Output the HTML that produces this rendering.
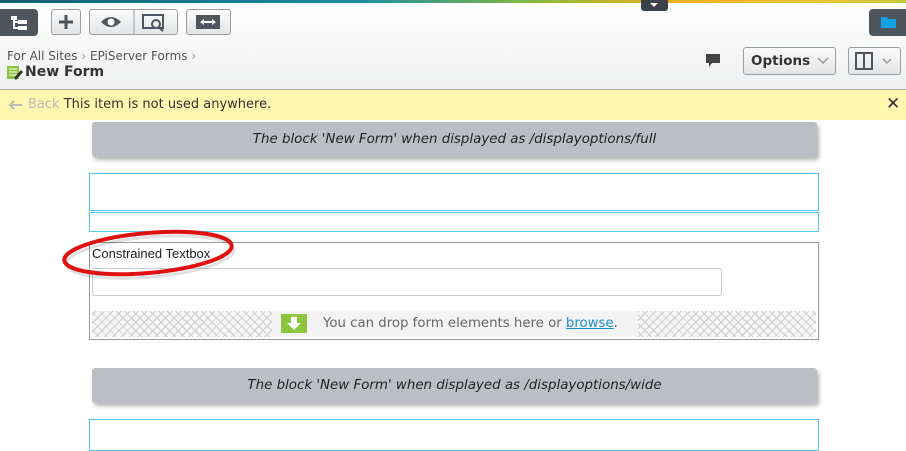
<!DOCTYPE html>
<html><head><style>
body{margin:0;width:906px;height:437px;overflow:hidden;font-family:"DejaVu Sans",sans-serif;background:#fff;position:relative}
.a{position:absolute}
.btn{position:absolute;top:9px;height:26px;border:1px solid #9a9ea3;border-radius:3px;background:linear-gradient(#fafafa,#e4e5e6);box-sizing:border-box}
.hdr{position:absolute;left:92px;width:725px;height:35px;background:#bbbfc4;border-radius:3px;box-shadow:2px 3px 4px rgba(0,0,0,.3);font-style:italic;font-size:13.4px;color:#222;text-align:center;line-height:35px}
.hatch{background-color:#f6f6f6;background-image:repeating-linear-gradient(45deg,transparent 0 5px,#ccc 5px 6px),repeating-linear-gradient(-45deg,transparent 0 5px,#ccc 5px 6px)}
</style></head><body>
<div class="a" style="left:0;top:0;width:906px;height:3px;background:linear-gradient(90deg,#0b5f73,#1d8fa0 40%,#8dbb3a 60%,#f2b01e 75%,#e9c330 90%,#c6c93a)"></div>
<div class="a" style="left:0;top:3px;width:906px;height:86px;background:linear-gradient(#fff,#eeeff0)"></div>
<div class="a" style="left:0;top:89px;width:906px;height:1px;background:#a9a9a9"></div>
<div class="a" style="left:641px;top:0;width:27px;height:11px;background:#3a414b;border-radius:0 0 3px 3px"><div class="a" style="left:9px;top:3px;border:4px solid transparent;border-top:4px solid #fff;border-bottom:0"></div></div>
<div class="a" style="left:0;top:9px;width:38px;height:27px;background:#4f555d;border-radius:0 4px 4px 0">
<svg width="38" height="27"><g fill="#fff"><rect x="11" y="7" width="6" height="4"/><rect x="18" y="11" width="9" height="4"/><rect x="18" y="17" width="9" height="4"/><rect x="13" y="11" width="2" height="9"/><rect x="13" y="12" width="5" height="2"/><rect x="13" y="18" width="5" height="2"/></g></svg></div>
<div class="btn" style="left:51px;width:30px"><svg width="28" height="24"><path d="M14 5v14M7 12h14" stroke="#4f555d" stroke-width="3"/></svg></div>
<div class="btn" style="left:89px;width:89px"><svg width="87" height="24"><path d="M11 12q10-10 20 0q-10 10-20 0z" fill="#4f555d"/><circle cx="21" cy="12" r="3.5" fill="#fff"/><line x1="44" y1="0" x2="44" y2="24" stroke="#9a9ea3"/><rect x="53" y="5" width="20" height="13" fill="none" stroke="#4f555d" stroke-width="2"/><circle cx="66" cy="14" r="4" fill="#eee" stroke="#4f555d" stroke-width="2"/><path d="M69 17l4 4" stroke="#4f555d" stroke-width="2.5"/></svg></div>
<div class="btn" style="left:186px;width:45px"><svg width="43" height="24"><rect x="9" y="5" width="24" height="14" fill="#4f555d"/><path d="M13 12l4-3v6zM29 12l-4-3v6z M17 11h8v2h-8z" fill="#fff"/></svg></div>
<div class="a" style="left:869px;top:9px;width:37px;height:27px;background:#4f555d;border-radius:4px 0 0 4px"><svg width="37" height="27"><path d="M12 8h6l1 2h8v9h-15z" fill="#0fa0e6"/></svg></div>
<div class="a" style="left:7px;top:49px;font-size:12px;color:#555">For All Sites <span style="color:#999">›</span> EPiServer Forms <span style="color:#999">›</span></div>
<svg class="a" style="left:7px;top:65px" width="16" height="15"><rect x="0" y="1" width="12" height="13" fill="#8cc63e"/><path d="M2 4h8M2 7h8M2 10h8" stroke="#fff"/><path d="M7 13l7-8 2 2-7 8z" fill="#333"/></svg>
<div class="a" style="left:25px;top:64px;font-size:14px;font-weight:bold;color:#333">New Form</div>
<svg class="a" style="left:706px;top:54px" width="14" height="14"><path d="M0 0h14v9h-8l-3 4v-4h-3z" fill="#444"/></svg>
<div class="btn" style="left:743px;top:47px;width:93px;height:28px;font-weight:bold;font-size:13.5px;color:#333;line-height:26px;padding-left:7px">Options<svg class="a" style="right:6px;top:9px" width="12" height="8"><path d="M1 1l5 5 5-5" fill="none" stroke="#999" stroke-width="1.5"/></svg></div>
<div class="btn" style="left:848px;top:47px;width:53px;height:28px"><svg width="51" height="26"><rect x="7" y="5" width="16" height="16" fill="none" stroke="#4f555d" stroke-width="2"/><path d="M15 5v16" stroke="#4f555d" stroke-width="2"/><path d="M34 11l4 4 4-4" fill="none" stroke="#999" stroke-width="1.5"/></svg></div>
<div class="a" style="left:0;top:90px;width:906px;height:30px;background:#fff6b0"></div>
<svg class="a" style="left:9px;top:100px" width="14" height="10"><path d="M1 5h12M5 1L1 5l4 4" fill="none" stroke="#bbb" stroke-width="2"/></svg>
<div class="a" style="left:28px;top:97px;font-size:13px;color:#bbb">Back <span style="color:#333">This item is not used anywhere.</span></div>
<div class="a" style="left:886px;top:94px;font-size:17px;font-weight:bold;color:#333">✕</div>
<div class="hdr" style="top:122px">The block 'New Form' when displayed as /displayoptions/full</div>
<div class="a" style="left:89px;top:173px;width:728px;height:36px;border:1px solid #4ec9ef"></div>
<div class="a" style="left:89px;top:212px;width:728px;height:18px;border:1px solid #4ec9ef"></div>
<div class="a" style="left:89px;top:242px;width:728px;height:96px;border:1px solid #999"></div>
<div class="a" style="left:92px;top:246px;font-family:'Liberation Sans',sans-serif;font-size:13px;color:#222">Constrained Textbox</div>
<div class="a" style="left:92px;top:268px;width:628px;height:26px;border:1px solid #ccc;border-radius:3px"></div>
<div class="a hatch" style="left:92px;top:311px;width:724px;height:26px"></div>
<div class="a" style="left:272px;top:311px;width:366px;height:26px;background:#f3f3f3"></div>
<div class="a" style="left:281px;top:314px;width:26px;height:19px;background:#8cc63e"><svg width="26" height="19"><path d="M10 3h6v6h4l-7 7-7-7h4z" fill="#fff"/></svg></div>
<div class="a" style="left:323px;top:316px;font-size:13.3px;color:#666">You can drop form elements here or <span style="color:#1a8fd0;text-decoration:underline">browse</span>.</div>
<svg class="a" style="left:60px;top:222px" width="180" height="60"><ellipse cx="90" cy="35" rx="84" ry="20" fill="none" stroke="rgba(0,0,0,.12)" stroke-width="3" transform="rotate(-5 90 35)"/><ellipse cx="88" cy="31" rx="84" ry="20" fill="none" stroke="#e01010" stroke-width="4" transform="rotate(-5 88 31)"/></svg>
<div class="hdr" style="top:368px">The block 'New Form' when displayed as /displayoptions/wide</div>
<div class="a" style="left:89px;top:419px;width:728px;height:30px;border:1px solid #4ec9ef"></div>
</body></html>
